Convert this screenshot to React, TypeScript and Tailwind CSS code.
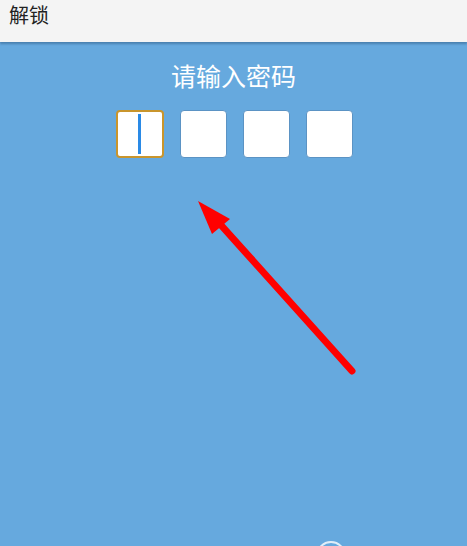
import React from "react";

const cjk = { fontFamily: '"Noto Sans CJK SC", "Noto Sans", sans-serif' };

export default function App() {
  return (
    <div className="relative flex min-h-[546px] flex-col overflow-hidden bg-[#66a9de]" style={cjk}>
      {/* Header */}
      <header className="relative z-10 flex h-[42px] items-start bg-[#f4f4f4] px-[9px] pt-[1px] shadow-[0_2px_2px_rgba(40,80,120,0.45)]">
        <span className="text-[20px] leading-[28px] text-[#222]">解锁</span>
      </header>

      {/* Content */}
      <main className="flex flex-1 flex-col items-center pt-[16px]">
        <h1 className="text-[25px] leading-[34px] text-white">请输入密码</h1>
        <div className="mt-[18px] flex gap-[16px] pl-[1px]">
          <div className="flex h-[48px] w-[48px] items-center justify-center rounded-[4px] border-2 border-[#c9952c] bg-white">
            <div className="h-[40px] w-[3px] bg-[#2a8ae6]" />
          </div>
          <div className="h-[48px] w-[47px] rounded-[4px] border border-[#5b93c4] bg-white" />
          <div className="h-[48px] w-[47px] rounded-[4px] border border-[#5b93c4] bg-white" />
          <div className="h-[48px] w-[47px] rounded-[4px] border border-[#5b93c4] bg-white" />
        </div>
      </main>

      {/* Annotation arrow */}
      <svg className="pointer-events-none absolute left-0 top-0" width="467" height="546" viewBox="0 0 467 546">
        <line x1="352" y1="371" x2="220" y2="224" stroke="#ff0000" strokeWidth="7" strokeLinecap="round" />
        <polygon points="198,201 230,219 212,234" fill="#ff0000" />
      </svg>

      {/* Partial circle at bottom edge */}
      <div className="pointer-events-none absolute left-[316px] top-[541px] h-[30px] w-[30px] rounded-full border-2 border-white/80" />
    </div>
  );
}
